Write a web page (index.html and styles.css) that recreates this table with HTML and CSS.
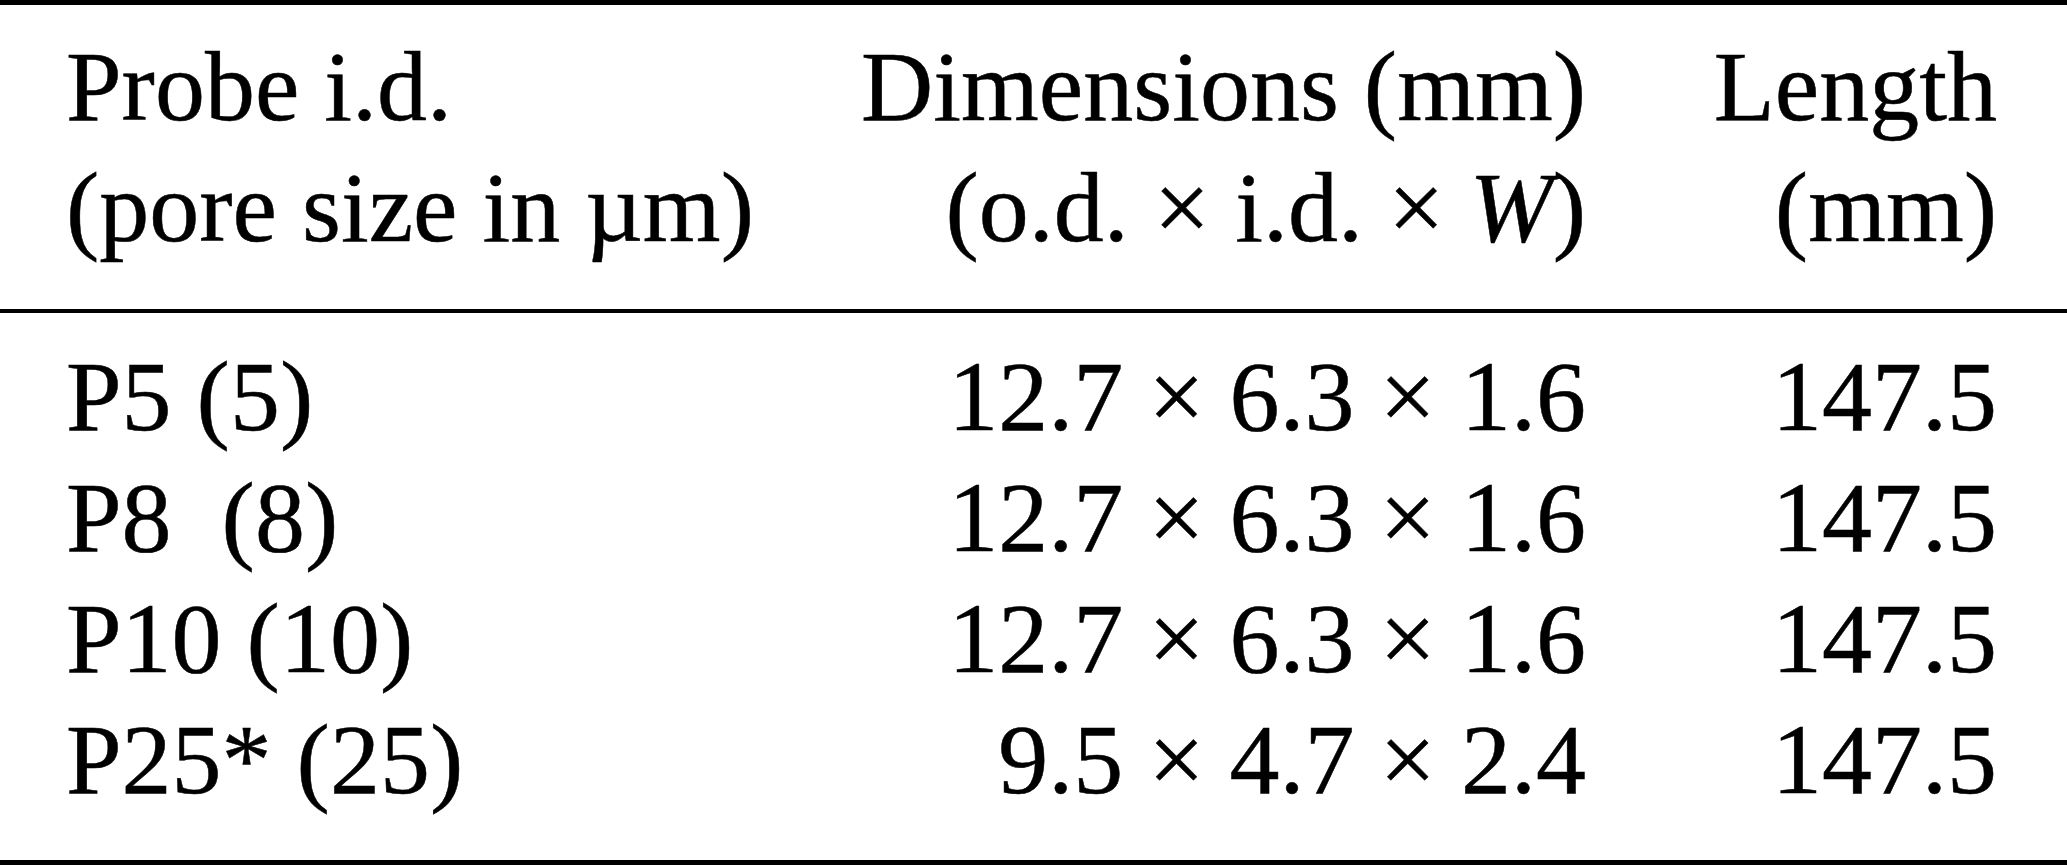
FILE: index.html
```html
<!DOCTYPE html>
<html lang="en">

<head>
  <meta charset="UTF-8">
  <meta name="viewport" content="width=device-width, initial-scale=1.0">
  <title>Probe dimensions</title>

  <link rel="stylesheet" href="styles.css">

</head>

<body>

  <div class="probe-table">
    <div class="grid head">
      <div class="cell">Probe i.d.<br>(pore size in µm)</div>
      <div class="cell num">Dimensions (mm)<br>(o.d. × i.d. × <i>W</i>)</div>
      <div class="cell num">Length<br>(mm)</div>
    </div>

    <div class="grid body">
      <div class="cell">P5 (5)</div>
      <div class="cell num">12.7 × 6.3 × 1.6</div>
      <div class="cell num">147.5</div>

      <div class="cell">P8&nbsp; (8)</div>
      <div class="cell num">12.7 × 6.3 × 1.6</div>
      <div class="cell num">147.5</div>

      <div class="cell">P10 (10)</div>
      <div class="cell num">12.7 × 6.3 × 1.6</div>
      <div class="cell num">147.5</div>

      <div class="cell">P25* (25)</div>
      <div class="cell num">9.5 × 4.7 × 2.4</div>
      <div class="cell num">147.5</div>
    </div>
  </div>

</body>

</html>
```

FILE: styles.css
```css
html,
body {
  margin: 0;
  background: #fff;
}

.probe-table {
  width: 2067px;
  font-family: "Liberation Serif", "Times New Roman", serif;
  font-size: 100px;
  line-height: 121px;
  color: #000;
  -webkit-text-stroke: 0.5px #000;
}

.grid {
  display: grid;
  grid-template-columns: 720px 800px 411px;
  padding: 0 70px 0 66px;
}

.head {
  border-top: 5px solid #000;
  border-bottom: 4px solid #000;
  padding-top: 21px;
  padding-bottom: 41px;
}

.body {
  border-bottom: 5px solid #000;
  padding-top: 23px;
  padding-bottom: 40px;
}

.cell {
  white-space: nowrap;
}

.num {
  text-align: right;
}
```
